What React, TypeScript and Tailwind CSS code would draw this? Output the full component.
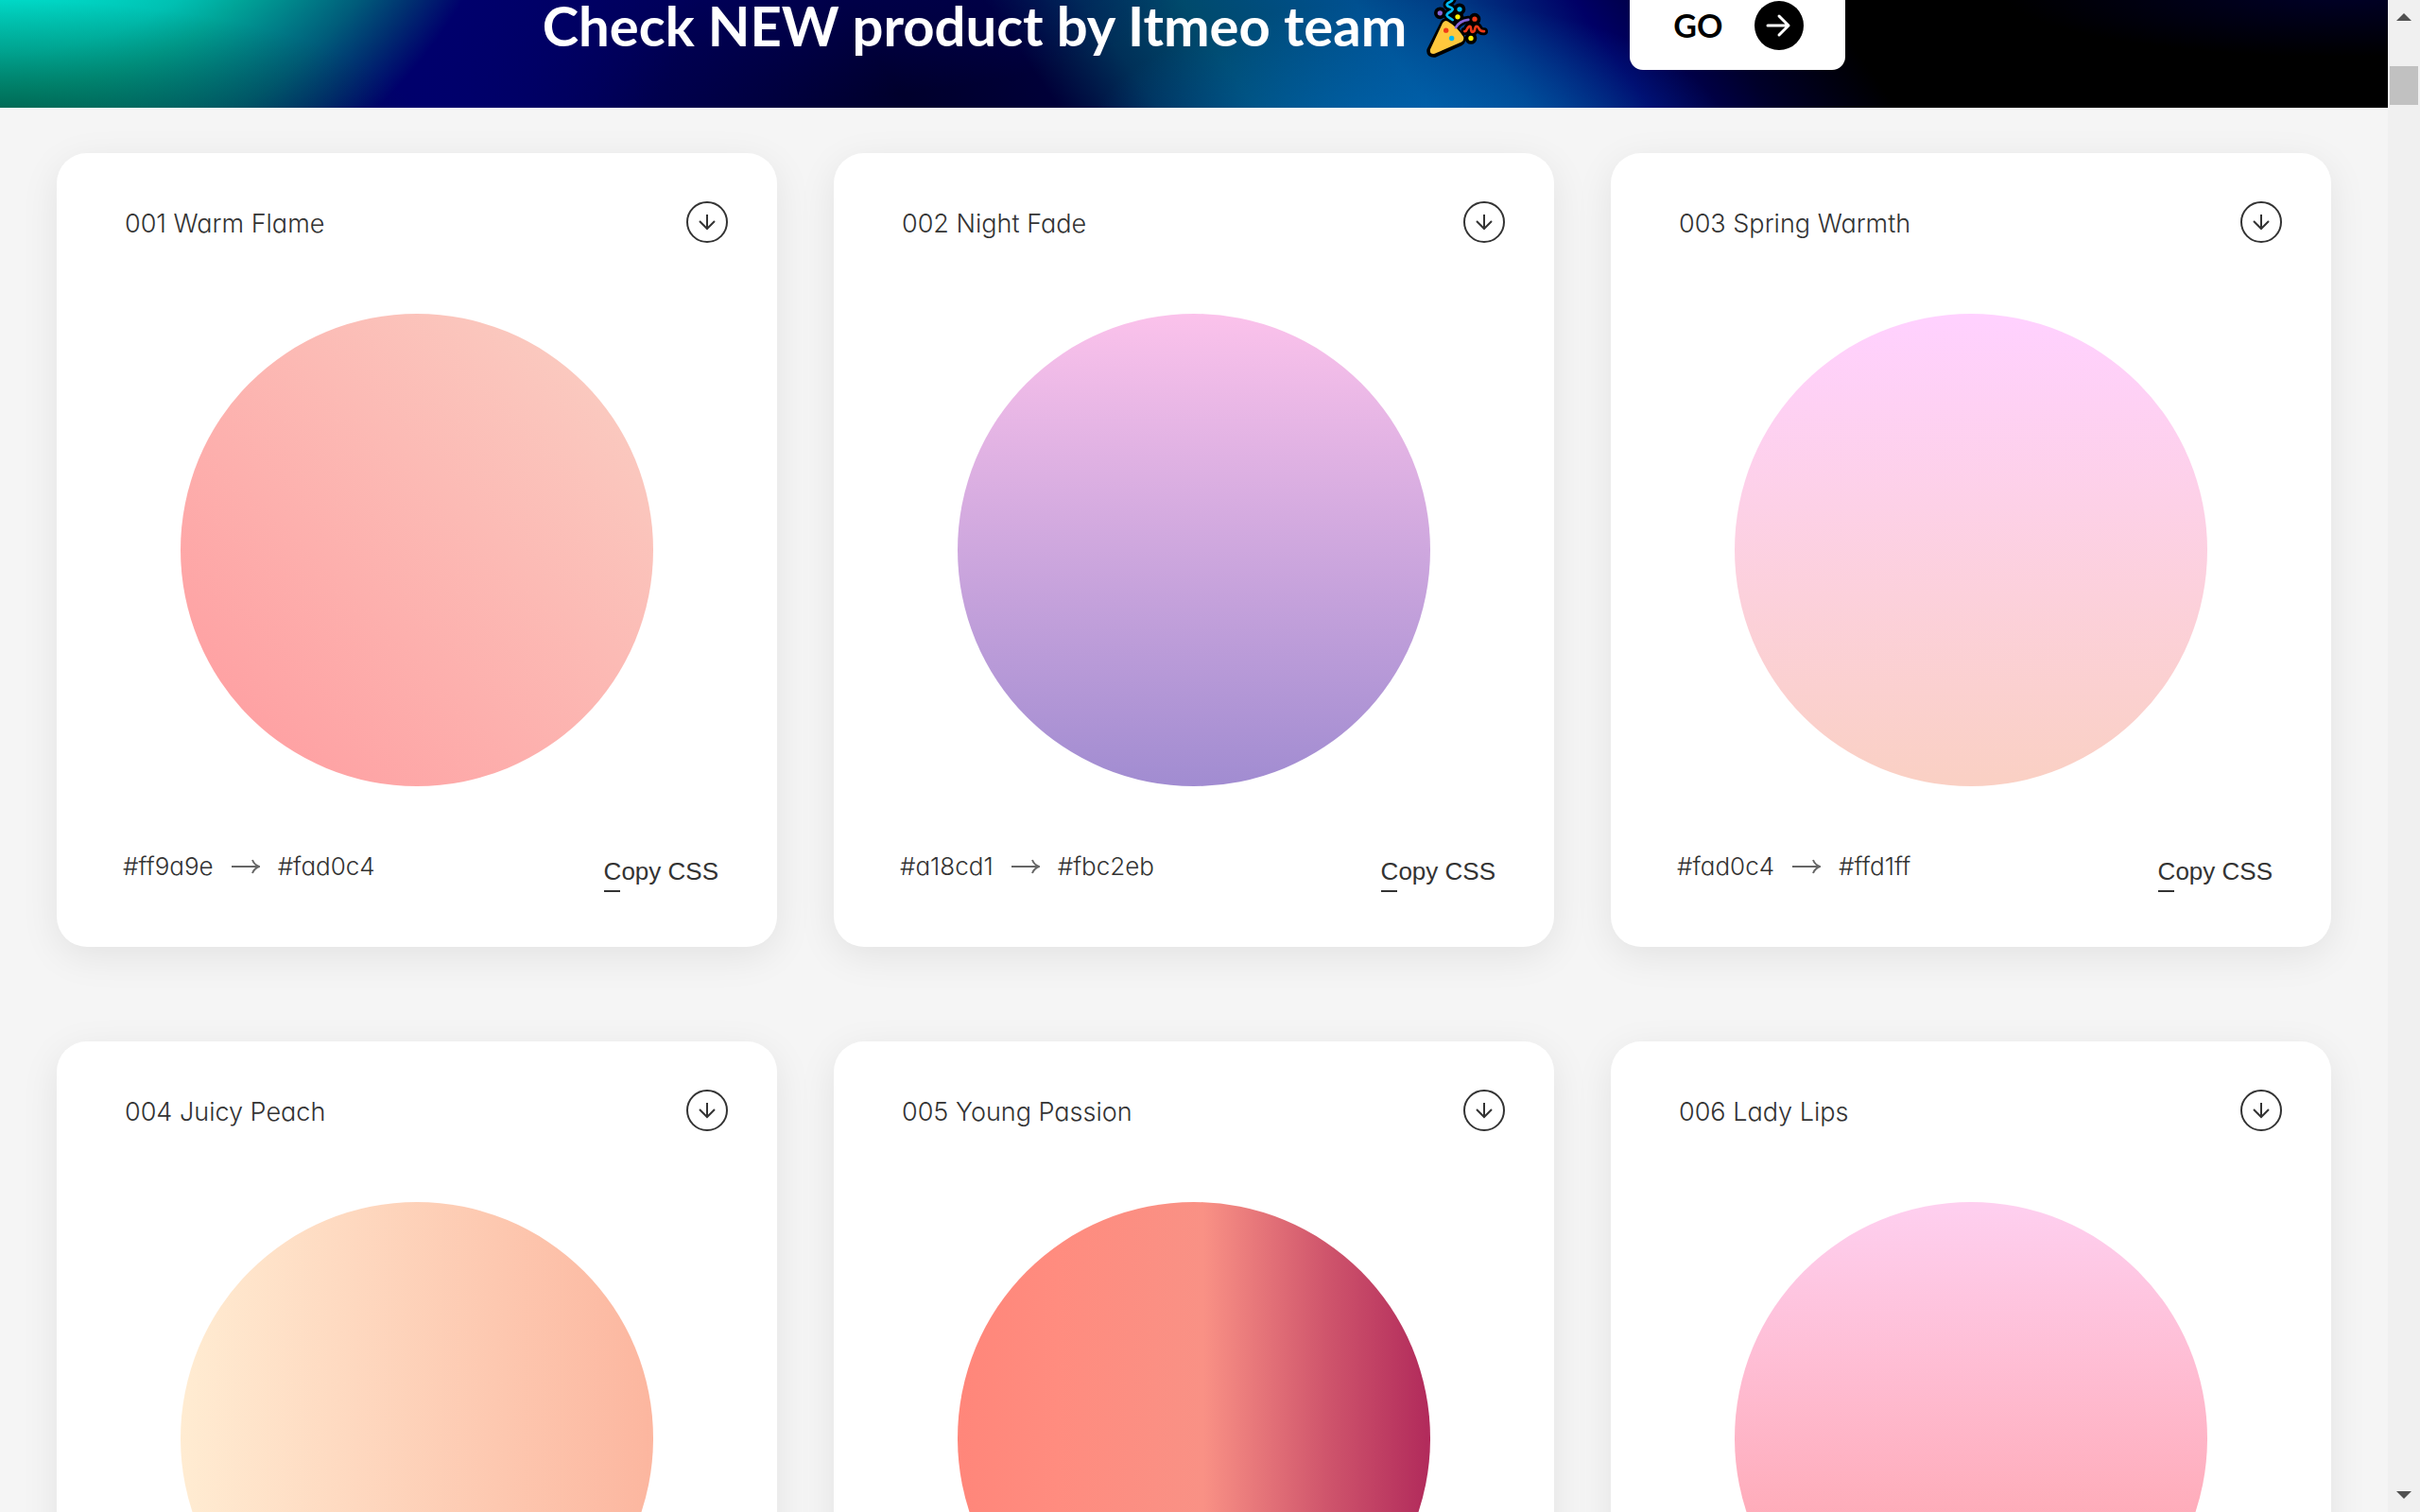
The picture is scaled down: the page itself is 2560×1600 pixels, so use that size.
import React from 'react';

interface Gradient {
  id: string;
  name: string;
  from: string;
  to: string;
  fill: string;
}

const gradients: Gradient[] = [
  { id: '001', name: 'Warm Flame', from: '#ff9a9e', to: '#fad0c4', fill: 'bg-[linear-gradient(45deg,#ff9a9e_0%,#fad0c4_99%,#fad0c4_100%)]' },
  { id: '002', name: 'Night Fade', from: '#a18cd1', to: '#fbc2eb', fill: 'bg-[linear-gradient(to_top,#a18cd1_0%,#fbc2eb_100%)]' },
  { id: '003', name: 'Spring Warmth', from: '#fad0c4', to: '#ffd1ff', fill: 'bg-[linear-gradient(to_top,#fad0c4_0%,#fad0c4_1%,#ffd1ff_100%)]' },
  { id: '004', name: 'Juicy Peach', from: '#ffecd2', to: '#fcb69f', fill: 'bg-[linear-gradient(to_right,#ffecd2_0%,#fcb69f_100%)]' },
  { id: '005', name: 'Young Passion', from: '#ff8177', to: '#b12a5b', fill: 'bg-[linear-gradient(to_right,#ff8177_0%,#ff867a_0%,#ff8c7f_21%,#f99185_52%,#cf556c_78%,#b12a5b_100%)]' },
  { id: '006', name: 'Lady Lips', from: '#ff9a9e', to: '#fecfef', fill: 'bg-[linear-gradient(to_top,#ff9a9e_0%,#fecfef_99%,#fecfef_100%)]' },
];

const PartyPopper = () => (
  <svg viewBox="76 -24 204 206" className="w-[68px] h-[69px]" fill="none" strokeLinecap="round" strokeLinejoin="round">
    <g stroke="#000" strokeWidth="24">
      <path d="M134 72 L92 156 Q90 168 104 167 L186 130 Q192 126 190 118 Q170 84 145 68 Q138 66 134 72Z" fill="#000" />
      <path d="M162 60 C154 52 148 54 144 46 C140 36 164 34 162 25 C158 16 142 20 144 10 C148 2 160 4 162 -6" />
      <path d="M172 84 Q184 62 212 59" />
      <path d="M200 96 C208 98 208 80 216 80 C224 80 216 98 226 98 C236 98 230 80 238 80 C248 80 242 98 262 96" />
      <path d="M122 38h.1M184 26h.1M178 50h.1M232 57h.1M220 118h.1" strokeWidth="38" />
    </g>
    <path d="M130 70 L91 153 Q88 170 105 167 L190 130 Q200 124 196 113 Q176 82 146 64 Q136 59 130 70Z" fill="#ffc83d" />
    <path d="M162 60 C154 52 148 54 144 46 C140 36 164 34 162 25 C158 16 142 20 144 10 C148 2 160 4 162 -6" stroke="#00b8f0" strokeWidth="8" />
    <path d="M172 84 Q184 62 212 59" stroke="#8764d8" strokeWidth="8" />
    <path d="M200 96 C208 98 208 80 216 80 C224 80 216 98 226 98 C236 98 230 80 238 80 C248 80 242 98 262 96" stroke="#f03a17" strokeWidth="8" />
    <g>
      <circle cx="122" cy="38" r="8" fill="#8764d8" />
      <circle cx="184" cy="26" r="8" fill="#00b8f0" />
      <circle cx="178" cy="50" r="8" fill="#fff100" />
      <circle cx="232" cy="57" r="8" fill="#f03a17" />
      <circle cx="220" cy="118" r="8" fill="#fff100" />
      <circle cx="141" cy="93" r="8" fill="#f03a17" />
      <circle cx="159" cy="118" r="8" fill="#00b8f0" />
    </g>
  </svg>
);

const Banner = () => (
  <header className="h-[114px] flex justify-center items-start overflow-hidden bg-[radial-gradient(ellipse_440px_130px_at_0px_130px,#003c1488,#003c1400),radial-gradient(circle_at_0px_-295px,#00d8c6_295px,#00c0b2_350px,#00a498_390px,#00848a_430px,#005c7a_480px,#003070_525px,#00006c_572px,#00006c00_800px),radial-gradient(ellipse_340px_150px_at_59%_150px,#0068b8cc,#0068b800),radial-gradient(ellipse_360px_70px_at_98%_-10px,#00002a,#00002a00),radial-gradient(ellipse_500px_130px_at_30%_-20px,#00006ca0,#00006c00),linear-gradient(55deg,#00006a_18%,#00002c_37%,#000038_43%,#003058_47%,#004a6c_51%,#005090_58%,#003a84_62%,#000066_67%,#00002a_72%,#000000_77%)]">
    <div className="h-[94px] -mt-5 flex items-center">
      <h1 className="font-['Lato'] font-bold text-[58px] leading-[48px] text-white whitespace-nowrap">Check NEW product by Itmeo team</h1>
      <div className="ml-5 mr-[148px]">
        <PartyPopper />
      </div>
      <a href="#go" className="h-[94px] w-[228px] pl-[46px] pr-11 bg-white rounded-[14px] flex items-center justify-between">
        <span className="font-['Lato'] font-bold text-[34px] leading-10 text-black">GO</span>
        <svg viewBox="0 0 52 52" className="w-[52px] h-[52px]" fill="none">
          <circle cx="26" cy="26" r="26" fill="#000" />
          <path d="M14 26h22M26 16l10 10l-10 10" stroke="#fff" strokeWidth="3" strokeLinecap="round" strokeLinejoin="round" />
        </svg>
      </a>
    </div>
  </header>
);

const GradientCard: React.FC<{ gradient: Gradient }> = ({ gradient }) => (
  <article className="h-[840px] bg-white rounded-[32px] shadow-[0_10px_40px_rgba(0,0,0,0.08)] flex flex-col text-[#333]">
    <div className="pl-[72px] pr-[52px] pt-[51px] flex justify-between items-start">
      <h2 className="font-['Inter'] font-light text-[27px] leading-[48px] [font-feature-settings:'cv11']">
        {gradient.id} {gradient.name}
      </h2>
      <button type="button" aria-label={`Download ${gradient.name}`}>
        <svg viewBox="0 0 44 44" className="w-11 h-11" fill="none" stroke="#333" strokeWidth="2">
          <circle cx="22" cy="22" r="21" />
          <path d="M22 14v15M14 21l8 8l8-8" />
        </svg>
      </button>
    </div>

    <div className={`mt-[71px] w-[500px] h-[500px] rounded-full self-center ${gradient.fill}`} />

    <div className="pl-[70px] pr-[62px] mt-16 flex justify-between items-start">
      <div className="flex items-center font-['Inter'] font-light text-[26px] leading-[42px] [font-feature-settings:'cv11']">
        <span>{gradient.from}</span>
        <svg viewBox="0 0 30 16" className="w-[30px] h-4 mx-[19px]" fill="none" stroke="#666" strokeWidth="2">
          <path d="M0 8h29M22 1q2 5 7 7q-5 2-7 7" />
        </svg>
        <span>{gradient.to}</span>
      </div>
      <button type="button" className="pt-1.5 flex flex-col items-start font-['Liberation_Sans'] text-[26px] leading-[40px] cursor-pointer">
        Copy CSS
        <span className="w-[17px] h-0.5 bg-[#333]" />
      </button>
    </div>
  </article>
);

const Scrollbar = () => (
  <div className="w-[34px] shrink-0 bg-[#f0f0f0] flex flex-col justify-between items-center py-[14px]">
    <div className="flex flex-col items-center gap-12">
      <svg viewBox="0 0 16 8" className="w-4 h-2" fill="#505050">
        <path d="M8 0l8 8H0z" />
      </svg>
      <div className="w-[30px] h-[41px] bg-[#c1c1c1]" />
    </div>
    <svg viewBox="0 0 16 8" className="w-4 h-2" fill="#505050">
      <path d="M0 0h16l-8 8z" />
    </svg>
  </div>
);

export default function App() {
  return (
    <div className="h-screen flex overflow-hidden bg-[#f5f5f5]">
      <div className="flex-1 min-w-0">
        <Banner />
        <main className="grid grid-cols-3 gap-x-[60px] gap-y-[100px] px-[60px] pt-12">
          {gradients.map((gradient) => (
            <GradientCard key={gradient.id} gradient={gradient} />
          ))}
        </main>
      </div>
      <Scrollbar />
    </div>
  );
}
